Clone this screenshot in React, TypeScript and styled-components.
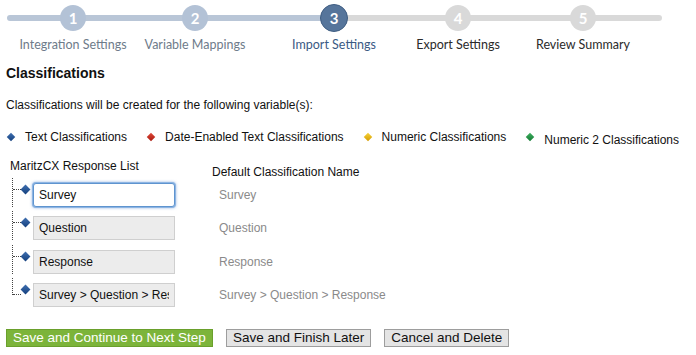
import React from "react";
import styled, { createGlobalStyle } from "styled-components";

const GlobalStyle = createGlobalStyle`
  html, body {
    margin: 0;
    padding: 0;
    background: #ffffff;
  }
  body {
    font-family: "Liberation Sans", Arial, sans-serif;
    color: #111;
  }
`;

type StepState = "done" | "current" | "todo";

const steps: { n: number; label: string; state: StepState; width: number }[] = [
  { n: 1, label: "Integration Settings", state: "done", width: 122 },
  { n: 2, label: "Variable Mappings", state: "done", width: 122 },
  { n: 3, label: "Import Settings", state: "current", width: 156 },
  { n: 4, label: "Export Settings", state: "todo", width: 92 },
  { n: 5, label: "Review Summary", state: "todo", width: 158 },
];

const legend = [
  { color: "blue", label: "Text Classifications", drop: 0 },
  { color: "red", label: "Date-Enabled Text Classifications", drop: 0 },
  { color: "yellow", label: "Numeric Classifications", drop: 0 },
  { color: "green", label: "Numeric 2 Classifications", drop: 3 },
];

const rows = [
  { value: "Survey", name: "Survey" },
  { value: "Question", name: "Question" },
  { value: "Response", name: "Response" },
  { value: "Survey > Question > Response", name: "Survey > Question > Response" },
];

const diamondColors: Record<string, [string, string]> = {
  blue: ["#3f6fb0", "#14407e"],
  red: ["#e04a3a", "#a8180e"],
  yellow: ["#f7d33a", "#d49b00"],
  green: ["#3fb060", "#137a33"],
};

const App = () => {
  return (
    <Page>
      <GlobalStyle />
      <Stepper>
        <Track />
        {steps.map((s) => (
          <Step key={s.n} $width={s.width}>
            <Circle $state={s.state}>{s.n}</Circle>
            <StepLabel $state={s.state}>{s.label}</StepLabel>
          </Step>
        ))}
      </Stepper>

      <Content>
        <Title>Classifications</Title>
        <Intro>Classifications will be created for the following variable(s):</Intro>

        <Legend>
          {legend.map((l) => (
            <LegendItem key={l.label} $drop={l.drop}>
              <Diamond $color={l.color} $size={6} />
              <span>{l.label}</span>
            </LegendItem>
          ))}
        </Legend>

        <Mapping>
          <HeadLeft>MaritzCX Response List</HeadLeft>
          <HeadRight>Default Classification Name</HeadRight>
          {rows.map((r, i) => (
            <React.Fragment key={r.name}>
              <TreeCell>
                <Branch $last={i === rows.length - 1} />
                <DiamondSlot>
                  <Diamond $color="blue" $size={7} />
                </DiamondSlot>
                <ValueInput
                  defaultValue={r.value}
                  $focused={i === 0}
                  readOnly
                />
              </TreeCell>
              <NameCell>{r.name}</NameCell>
            </React.Fragment>
          ))}
        </Mapping>

        <Actions>
          <Button $primary>Save and Continue to Next Step</Button>
          <Button>Save and Finish Later</Button>
          <Button>Cancel and Delete</Button>
        </Actions>
      </Content>
    </Page>
  );
};

export default App;

const Page = styled.div`
  width: 696px;
  height: 355px;
  overflow: hidden;
`;

const Stepper = styled.div`
  position: relative;
  display: flex;
  padding-left: 12px;
  height: 52px;
`;

const Track = styled.div`
  position: absolute;
  left: 7px;
  top: 15px;
  width: 655px;
  height: 6px;
  border-radius: 3px;
  background: linear-gradient(
    to right,
    #b9c6d7 0,
    #b9c6d7 327px,
    #d9d9d9 327px,
    #d9d9d9 100%
  );
`;

const Step = styled.div<{ $width: number }>`
  width: ${(p) => p.$width}px;
  display: flex;
  flex-direction: column;
  align-items: center;
`;

const circleBg: Record<StepState, string> = {
  done: "#b3c2d6",
  current: "#56759b",
  todo: "#d9d9d9",
};

const Circle = styled.div<{ $state: StepState }>`
  position: relative;
  z-index: 1;
  box-sizing: border-box;
  width: ${(p) => (p.$state === "current" ? 28 : 26)}px;
  height: ${(p) => (p.$state === "current" ? 28 : 26)}px;
  margin-top: ${(p) => (p.$state === "current" ? 4 : 5)}px;
  border-radius: 50%;
  background: ${(p) => circleBg[p.$state]};
  border: ${(p) => (p.$state === "current" ? "1px solid #3f5d82" : "none")};
  color: #ffffff;
  font-family: Lato, "Open Sans", sans-serif;
  font-weight: 700;
  font-size: 15px;
  display: flex;
  align-items: center;
  justify-content: center;
`;

const labelColor: Record<StepState, string> = {
  done: "#6e7b8a",
  current: "#3a5a84",
  todo: "#2a2a2a",
};

const StepLabel = styled.div<{ $state: StepState }>`
  margin-top: ${(p) => (p.$state === "current" ? 5 : 6)}px;
  font-family: Lato, "Open Sans", sans-serif;
  font-size: 12.5px;
  line-height: 15px;
  white-space: nowrap;
  color: ${(p) => labelColor[p.$state]};
`;

const Content = styled.div`
  padding-left: 6px;
`;

const Title = styled.div`
  margin-top: 13px;
  font-size: 14px;
  line-height: 17px;
  font-weight: 700;
  color: #111;
`;

const Intro = styled.div`
  margin-top: 16px;
  font-size: 12px;
  line-height: 14px;
  color: #111;
`;

const Legend = styled.div`
  margin-top: 18px;
  display: flex;
  gap: 19px;
  font-size: 12px;
  line-height: 14px;
  height: 14px;
  color: #111;
`;

const LegendItem = styled.div<{ $drop: number }>`
  display: flex;
  align-items: center;
  gap: 11px;
  padding-left: 2px;
  span {
    position: relative;
    top: ${(p) => p.$drop}px;
  }
`;

const Diamond = styled.div<{ $color: string; $size: number }>`
  flex: none;
  width: ${(p) => p.$size}px;
  height: ${(p) => p.$size}px;
  transform: rotate(45deg);
  background: linear-gradient(
    135deg,
    ${(p) => diamondColors[p.$color][0]},
    ${(p) => diamondColors[p.$color][1]}
  );
`;

const Mapping = styled.div`
  margin-top: 15px;
  display: grid;
  grid-template-columns: 206px 1fr;
  grid-template-rows: 14px repeat(4, 24px);
  row-gap: 9.6px;
  font-size: 12px;
  line-height: 14px;
`;

const HeadLeft = styled.div`
  padding-left: 4px;
  color: #111;
`;

const HeadRight = styled.div`
  padding-top: 6px;
  color: #111;
`;

const TreeCell = styled.div`
  display: flex;
  align-items: flex-start;
  height: 24px;
  padding-left: 6px;
`;

const Branch = styled.div<{ $last: boolean }>`
  position: relative;
  flex: none;
  width: 8px;
  margin-top: -5px;
  height: ${(p) => (p.$last ? 17 : 29)}px;
  border-left: 1px dotted #444;
  box-sizing: border-box;
  &::after {
    content: "";
    position: absolute;
    left: 0;
    top: ${(p) => (p.$last ? 16 : 11)}px;
    width: 8px;
    border-top: 1px dotted #444;
  }
`;

const DiamondSlot = styled.div`
  flex: none;
  width: 10px;
  height: 13px;
  display: flex;
  align-items: center;
  justify-content: center;
  margin-right: 3px;
`;

const ValueInput = styled.input<{ $focused: boolean }>`
  box-sizing: border-box;
  width: 142px;
  height: 24px;
  margin: 0;
  padding: 0 5px;
  font-family: "Liberation Sans", Arial, sans-serif;
  font-size: 12px;
  color: #111;
  outline: none;
  border-radius: ${(p) => (p.$focused ? 3 : 0)}px;
  background: ${(p) => (p.$focused ? "#ffffff" : "#ececec")};
  border: 1px solid ${(p) => (p.$focused ? "#5f94cf" : "#cfcfcf")};
  box-shadow: ${(p) =>
    p.$focused ? "0 0 0 1px #8db5e3, 0 0 3px 1px rgba(90,140,210,0.6)" : "none"};
`;

const NameCell = styled.div`
  display: flex;
  align-items: center;
  padding-left: 7px;
  color: #8a8a8a;
`;

const Actions = styled.div`
  margin-top: 22px;
  display: flex;
  gap: 13px;
`;

const Button = styled.button<{ $primary?: boolean }>`
  box-sizing: border-box;
  height: 18px;
  margin: 0;
  padding: 0 6px;
  font-family: "Liberation Sans", Arial, sans-serif;
  font-size: 13.5px;
  line-height: 16px;
  border-radius: 0;
  cursor: pointer;
  color: ${(p) => (p.$primary ? "#ffffff" : "#111111")};
  background: ${(p) => (p.$primary ? "#7cb43a" : "#e4e4e4")};
  border: 1px solid ${(p) => (p.$primary ? "#6aa02c" : "#9d9d9d")};
`;
